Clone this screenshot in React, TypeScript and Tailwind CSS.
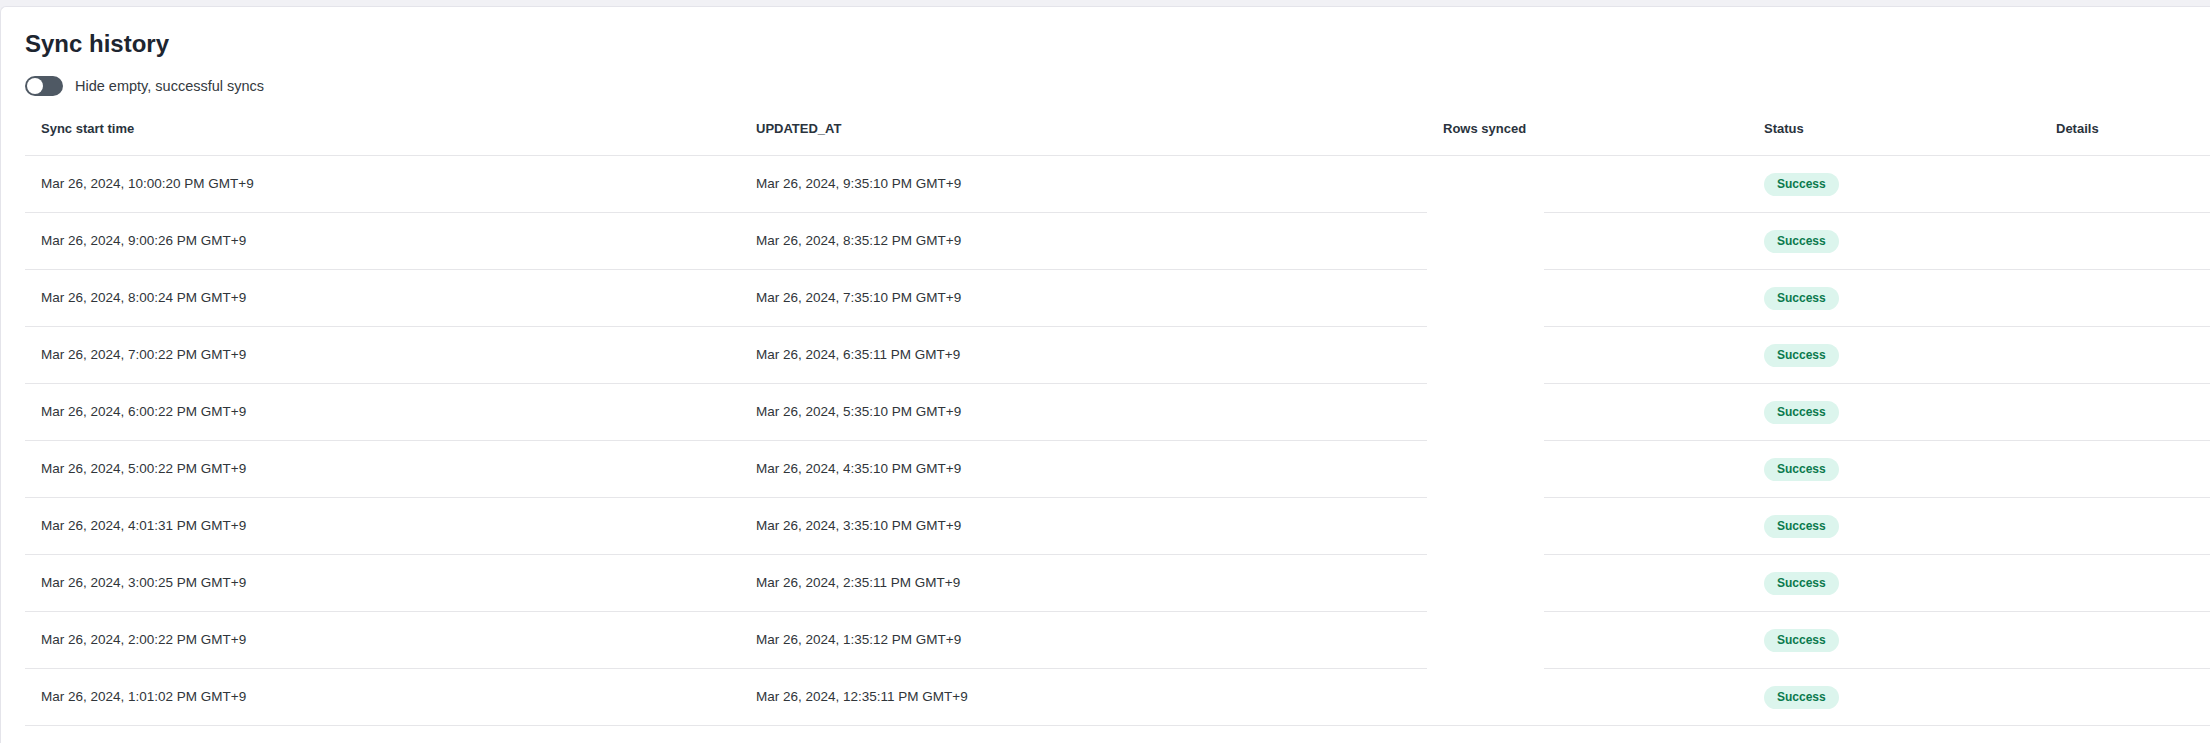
import React from "react";

const rows: [string, string][] = [
  ["Mar 26, 2024, 10:00:20 PM GMT+9", "Mar 26, 2024, 9:35:10 PM GMT+9"],
  ["Mar 26, 2024, 9:00:26 PM GMT+9", "Mar 26, 2024, 8:35:12 PM GMT+9"],
  ["Mar 26, 2024, 8:00:24 PM GMT+9", "Mar 26, 2024, 7:35:10 PM GMT+9"],
  ["Mar 26, 2024, 7:00:22 PM GMT+9", "Mar 26, 2024, 6:35:11 PM GMT+9"],
  ["Mar 26, 2024, 6:00:22 PM GMT+9", "Mar 26, 2024, 5:35:10 PM GMT+9"],
  ["Mar 26, 2024, 5:00:22 PM GMT+9", "Mar 26, 2024, 4:35:10 PM GMT+9"],
  ["Mar 26, 2024, 4:01:31 PM GMT+9", "Mar 26, 2024, 3:35:10 PM GMT+9"],
  ["Mar 26, 2024, 3:00:25 PM GMT+9", "Mar 26, 2024, 2:35:11 PM GMT+9"],
  ["Mar 26, 2024, 2:00:22 PM GMT+9", "Mar 26, 2024, 1:35:12 PM GMT+9"],
  ["Mar 26, 2024, 1:01:02 PM GMT+9", "Mar 26, 2024, 12:35:11 PM GMT+9"],
];

const font = { fontFamily: '"Liberation Sans", Arial, sans-serif' };

export default function App() {
  return (
    <div
      className="w-[2210px] h-[743px] overflow-hidden bg-[#f1f1f5] pt-[6px]"
      style={font}
    >
      <div className="w-[2400px] h-[737px] bg-white border-l border-t border-[#e4e4ea] rounded-tl-[6px] pl-[24px] pt-[21px]">
        <h1 className="text-[24px] leading-[32px] font-bold text-[#1d2530]">
          Sync history
        </h1>
        <div className="mt-4 flex items-center h-5 gap-3">
          <div className="w-[38px] h-5 rounded-full bg-[#4f5964] p-[2px] flex items-center">
            <div className="w-4 h-4 rounded-full bg-white" />
          </div>
          <span className="text-[14.5px] leading-5 text-[#343a40]">
            Hide empty, successful syncs
          </span>
        </div>
        <div className="mt-[7px] grid grid-cols-[715px_687px_321px_292px_300px]">
          {["Sync start time", "UPDATED_AT", "Rows synced", "Status", "Details"].map(
            (h) => (
              <div
                key={h}
                className="h-[53px] border-b border-[#e6e6e9] px-4 flex items-center text-[13px] font-bold text-[#2a333d]"
              >
                {h}
              </div>
            )
          )}
          {rows.map(([a, b], i) => {
            const last = i === rows.length - 1;
            return (
              <React.Fragment key={i}>
                <div className="h-[57px] border-b border-[#e6e6e9] px-4 flex items-center text-[13.5px] text-[#30353a]">
                  {a}
                </div>
                <div className="h-[57px] border-b border-[#e6e6e9] px-4 flex items-center text-[13.5px] text-[#30353a]">
                  {b}
                </div>
                {last ? (
                  <div className="h-[57px] border-b border-[#e6e6e9]" />
                ) : (
                  <div className="h-[57px] flex">
                    <div className="w-[117px] h-full" />
                    <div className="flex-1 h-full border-b border-[#e6e6e9]" />
                  </div>
                )}
                <div className="h-[57px] border-b border-[#e6e6e9] px-4 flex items-center">
                  <span className="h-[23px] px-[13px] rounded-full bg-[#dcf5ed] text-[#0b7a4e] text-[12px] font-bold flex items-center">
                    Success
                  </span>
                </div>
                <div className="h-[57px] border-b border-[#e6e6e9]" />
              </React.Fragment>
            );
          })}
        </div>
      </div>
    </div>
  );
}
